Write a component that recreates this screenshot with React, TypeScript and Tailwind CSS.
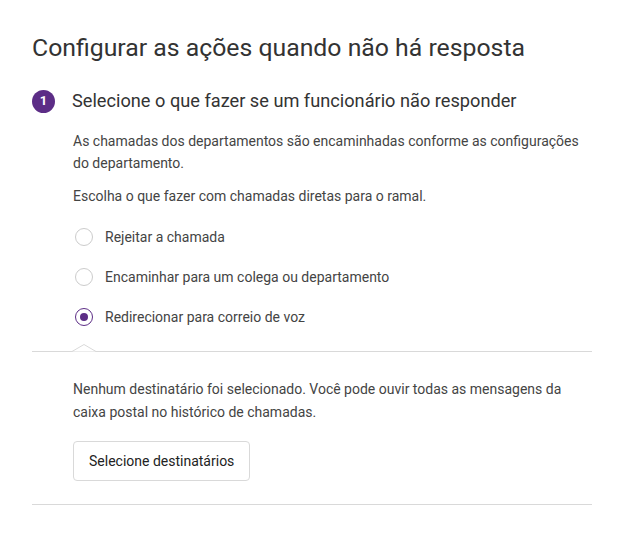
import { useState } from "react";

const options = [
    "Rejeitar a chamada",
    "Encaminhar para um colega ou departamento",
    "Redirecionar para correio de voz",
];

const App = () => {
    const [selected, setSelected] = useState(2);

    return (
        <div className="min-h-[537px] bg-white px-8 pt-[32px] font-['Roboto',sans-serif] text-[#333]">
            <h1 className="text-[24.8px] leading-[32px] font-normal text-[#333]">
                Configurar as ações quando não há resposta
            </h1>

            <div className="mt-[25px] flex items-center gap-[17px]">
                <span className="flex h-[23px] w-[23px] items-center justify-center rounded-full bg-[#5c2d86] text-[13px] font-bold text-white">
                    1
                </span>
                <h2 className="text-[18.2px] leading-[24px] text-[#333]">
                    Selecione o que fazer se um funcionário não responder
                </h2>
            </div>

            <div className="pl-[41px]">
                <p className="mt-[17px] text-[14px] leading-[22px] text-[#444]">
                    As chamadas dos departamentos são encaminhadas conforme as configurações do departamento.
                </p>
                <p className="mt-[11px] text-[14px] leading-[22px] text-[#444]">
                    Escolha o que fazer com chamadas diretas para o ramal.
                </p>

                <div className="mt-[18px] flex flex-col gap-[16px]">
                    {options.map((label, index) => (
                        <label key={index} className="flex cursor-pointer items-center gap-[12px] text-[14px] leading-[24px] text-[#444]" onClick={() => setSelected(index)}>
                            <span className="ml-[2px] flex h-[18px] w-[18px] items-center justify-center">
                                <span className={`flex h-[18px] w-[18px] items-center justify-center rounded-full border ${index === selected ? "border-[#5c2d86] border-[1.5px]" : "border-[#ccc]"}`}>
                                    {index === selected && <span className="h-[8px] w-[8px] rounded-full bg-[#5c2d86]" />}
                                </span>
                            </span>
                            {label}
                        </label>
                    ))}
                </div>
            </div>

            <div className="relative mt-[22px] h-px bg-[#d9d9d9]">
                <svg className="absolute left-[40px] top-[-7px]" width="24" height="8" viewBox="0 0 24 8">
                    <path d="M0 7.5 L12 0.5 L24 7.5" fill="white" stroke="#d9d9d9" strokeWidth="1" />
                </svg>
            </div>

            <div className="pl-[41px]">
                <p className="mt-[26px] text-[14px] leading-[23px] text-[#444]">
                    Nenhum destinatário foi selecionado. Você pode ouvir todas as mensagens da caixa postal no histórico de chamadas.
                </p>
                <button className="mt-[17px] h-[40px] rounded border border-[#d9d9d9] bg-white px-[15px] text-[14px] font-normal text-[#222]">
                    Selecione destinatários
                </button>
            </div>

            <div className="mt-[23px] h-px bg-[#d9d9d9]" />
        </div>
    );
};

export default App;
